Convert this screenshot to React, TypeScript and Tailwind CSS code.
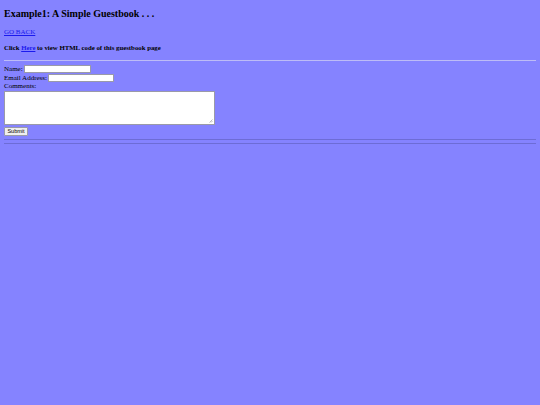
export default function App() {
  return (
    <div className="min-h-screen bg-[#8583ff] px-[4px] pt-[8px] font-['Liberation_Serif',serif] text-black">
      <h3 className="text-[10px] font-bold leading-[12px]">Example1: A Simple Guestbook . . .</h3>

      <p className="mt-[8px] text-[7px] leading-[8px]">
        <a href="#" className="text-[#1a1aee] underline">GO BACK</a>
      </p>

      <p className="mt-[8px] text-[6.8px] font-bold leading-[8px]">
        Click <a href="#" className="text-[#1a1aee] underline">Here</a> to view HTML code of this guestbook page
      </p>

      <div className="mt-[8px] h-px bg-[#bdbcf6]" />

      <form className="mt-[4px] text-[7px] leading-[8px]" onSubmit={(e) => e.preventDefault()}>
        <div className="flex h-[8.5px] items-center gap-[1px]">
          <span>Name:</span>
          <input className="h-[8px] w-[67px] border border-[#9a9aa8] bg-white outline-none" />
        </div>
        <div className="flex h-[8.5px] items-center gap-[1px]">
          <span>Email Address:</span>
          <input className="h-[8px] w-[66px] border border-[#9a9aa8] bg-white outline-none" />
        </div>
        <div className="h-[9px]">Comments:</div>
        <div className="relative h-[34px] w-[211px] border border-[#9a9aa8] bg-white">
          <textarea className="h-full w-full resize-none bg-transparent outline-none" />
          <svg className="absolute right-[1px] bottom-[1px]" width="4" height="4" viewBox="0 0 4 4">
            <path d="M0.5 3.5 L3.5 0.5 M2 3.5 L3.5 2" stroke="#909090" strokeWidth="0.6" />
          </svg>
        </div>
        <button
          type="submit"
          className="mt-[2px] flex h-[9px] w-[24px] items-center justify-center rounded-[1px] border border-[#9a9aa8] bg-[#efefef] font-['Liberation_Sans',sans-serif] text-[5.5px] leading-none text-black"
        >
          Submit
        </button>
      </form>

      <div className="mt-[3px] h-px bg-[#6d6cd6]" />
      <div className="mt-[3px] h-px bg-[#6d6cd6]" />
    </div>
  )
}
